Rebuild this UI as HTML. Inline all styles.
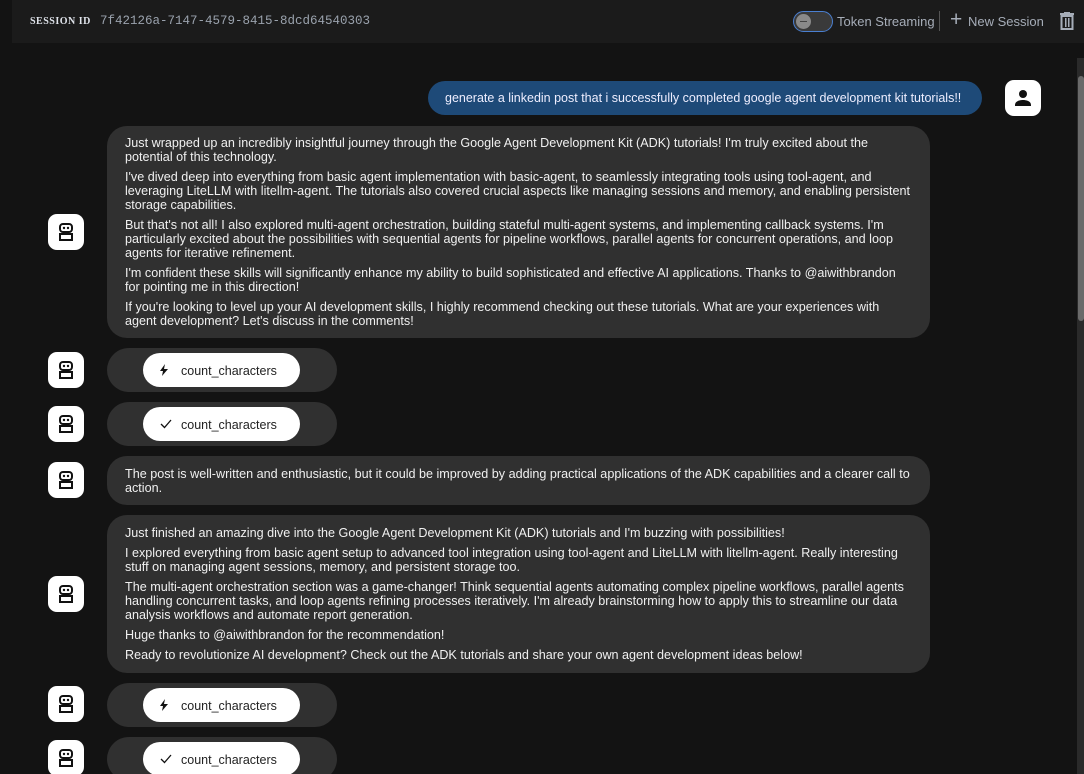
<!DOCTYPE html>
<html><head><style>
html,body{margin:0;width:1084px;height:774px;overflow:hidden}
body{background:#131313;font-family:"Liberation Sans",Arial,sans-serif;position:relative;color:#e8e8e8}
.hdr{position:absolute;left:12px;top:0;width:1072px;height:43px;background:#1b1b1b}
.sid{position:absolute;left:18px;top:16px;font-family:"Liberation Serif",serif;font-weight:bold;font-size:10px;color:#dfe3ea;letter-spacing:.5px}
.sidv{position:absolute;left:88px;top:14px;font-family:"Liberation Mono",monospace;font-size:12.5px;color:#9aa2ad}
.tog{position:absolute;left:793px;top:11px;width:40px;height:21px;border:1px solid #4a7fd0;border-radius:11px;background:#3a3a3a;box-sizing:border-box}
.tog i{position:absolute;left:2px;top:2px;width:15px;height:15px;border-radius:50%;background:#8a8a8a}
.tog i:after{content:"";position:absolute;left:4px;top:7px;width:7px;height:1px;background:#444}
.ht{position:absolute;top:14px;font-size:13px;color:#a6adb8}
.av{position:absolute;left:48px;width:36px;height:36px;background:#fff;border-radius:9px}
.bb{position:absolute;left:107px;width:823px;background:#303030;border-radius:20px;box-sizing:border-box;padding:9px 18px;font-size:12.6px;line-height:14px;color:#f0f0f0}
.bb p{margin:0 0 6px}.bb p:last-child{margin:0}
.tb{position:absolute;left:107px;width:230px;height:44px;background:#303030;border-radius:22px}
.btn{position:absolute;left:36px;top:5px;width:157px;height:34px;background:#fff;border-radius:17px;color:#222;font-size:12.5px;line-height:34px}
.btn span{position:absolute;left:38px;top:1px}
.btn svg{position:absolute;left:17px;top:11px}
</style></head><body>
<div class="hdr">
<div class="sid">SESSION ID</div><div class="sidv">7f42126a-7147-4579-8415-8dcd64540303</div>
</div>
<div class="tog"><i></i></div>
<div class="ht" style="left:837px;top:14px">Token Streaming</div>
<div style="position:absolute;left:939px;top:11px;width:1px;height:20px;background:#555"></div>
<div class="ht" style="left:950px;top:8px;font-size:21px;color:#a6adb8">+</div>
<div class="ht" style="left:968px">New Session</div>
<svg style="position:absolute;left:1059px;top:12px" width="16" height="18" viewBox="0 0 16 18"><rect x="1" y="1" width="14" height="2" fill="#a6adb8"/><rect x="5" y="0" width="6" height="2" fill="#a6adb8"/><path d="M2.5 4h11v13h-11z" fill="none" stroke="#a6adb8" stroke-width="2"/><rect x="6" y="6" width="1.5" height="9" fill="#a6adb8"/><rect x="9" y="6" width="1.5" height="9" fill="#a6adb8"/></svg>
<div style="position:absolute;left:1077px;top:58px;width:7px;height:716px;background:#2a2a2a"></div>
<div style="position:absolute;left:1078px;top:76px;width:6px;height:245px;background:#6a6a6a;border-radius:3px"></div>

<div style="position:absolute;left:428px;top:81px;width:554px;height:34px;background:#1e4a78;border-radius:17px;font-size:12.5px;line-height:34px;color:#eef;box-sizing:border-box;padding-left:17px">generate a linkedin post that i successfully completed google agent development kit tutorials!!</div>
<div class="av" style="left:1005px;top:80px"><svg width="36" height="36" viewBox="0 0 36 36"><circle cx="18" cy="14" r="4" fill="#111"/><path d="M10 25c0-4 5-5 8-5s8 1 8 5v1H10z" fill="#111"/></svg></div>

<svg width="0" height="0" style="position:absolute"><defs><g id="bot"><rect x="12" y="10" width="12" height="8" rx="3" fill="none" stroke="#111" stroke-width="2"/><circle cx="16" cy="14" r="1.2" fill="#111"/><circle cx="20" cy="14" r="1.2" fill="#111"/><rect x="12" y="20" width="12" height="6" fill="none" stroke="#111" stroke-width="2"/></g></defs></svg>

<div class="av" style="top:214px"><svg width="36" height="36"><use href="#bot"/></svg></div>
<div class="bb" style="top:126px;height:212px;padding-top:10px">
<p>Just wrapped up an incredibly insightful journey through the Google Agent Development Kit (ADK) tutorials! I'm truly excited about the potential of this technology.</p>
<p>I've dived deep into everything from basic agent implementation with basic-agent, to seamlessly integrating tools using tool-agent, and leveraging LiteLLM with litellm-agent. The tutorials also covered crucial aspects like managing sessions and memory, and enabling persistent storage capabilities.</p>
<p>But that's not all! I also explored multi-agent orchestration, building stateful multi-agent systems, and implementing callback systems. I'm particularly excited about the possibilities with sequential agents for pipeline workflows, parallel agents for concurrent operations, and loop agents for iterative refinement.</p>
<p>I'm confident these skills will significantly enhance my ability to build sophisticated and effective AI applications. Thanks to @aiwithbrandon for pointing me in this direction!</p>
<p>If you're looking to level up your AI development skills, I highly recommend checking out these tutorials. What are your experiences with agent development? Let's discuss in the comments!</p>
</div>

<div class="av" style="top:352px"><svg width="36" height="36"><use href="#bot"/></svg></div>
<div class="tb" style="top:348px"><div class="btn"><svg width="8" height="12" viewBox="0 0 8 12"><path d="M5 0L0 7h3l-1 5 6-7H4z" fill="#111"/></svg><span>count_characters</span></div></div>
<div class="av" style="top:406px"><svg width="36" height="36"><use href="#bot"/></svg></div>
<div class="tb" style="top:402px"><div class="btn"><svg width="12" height="12" viewBox="0 0 12 12"><path d="M1 6l3.5 3.5L11 2" fill="none" stroke="#111" stroke-width="1.3"/></svg><span>count_characters</span></div></div>

<div class="av" style="top:462px"><svg width="36" height="36"><use href="#bot"/></svg></div>
<div class="bb" style="top:456px;height:49px;padding-top:11px">The post is well-written and enthusiastic, but it could be improved by adding practical applications of the ADK capabilities and a clearer call to action.</div>

<div class="av" style="top:576px"><svg width="36" height="36"><use href="#bot"/></svg></div>
<div class="bb" style="top:515px;height:158px;padding-top:11px">
<p>Just finished an amazing dive into the Google Agent Development Kit (ADK) tutorials and I'm buzzing with possibilities!</p>
<p>I explored everything from basic agent setup to advanced tool integration using tool-agent and LiteLLM with litellm-agent. Really interesting stuff on managing agent sessions, memory, and persistent storage too.</p>
<p>The multi-agent orchestration section was a game-changer! Think sequential agents automating complex pipeline workflows, parallel agents handling concurrent tasks, and loop agents refining processes iteratively. I'm already brainstorming how to apply this to streamline our data analysis workflows and automate report generation.</p>
<p>Huge thanks to @aiwithbrandon for the recommendation!</p>
<p>Ready to revolutionize AI development? Check out the ADK tutorials and share your own agent development ideas below!</p>
</div>

<div class="av" style="top:686px"><svg width="36" height="36"><use href="#bot"/></svg></div>
<div class="tb" style="top:683px"><div class="btn"><svg width="8" height="12" viewBox="0 0 8 12"><path d="M5 0L0 7h3l-1 5 6-7H4z" fill="#111"/></svg><span>count_characters</span></div></div>
<div class="av" style="top:740px"><svg width="36" height="36"><use href="#bot"/></svg></div>
<div class="tb" style="top:737px"><div class="btn"><svg width="12" height="12" viewBox="0 0 12 12"><path d="M1 6l3.5 3.5L11 2" fill="none" stroke="#111" stroke-width="1.3"/></svg><span>count_characters</span></div></div>
</body></html>
